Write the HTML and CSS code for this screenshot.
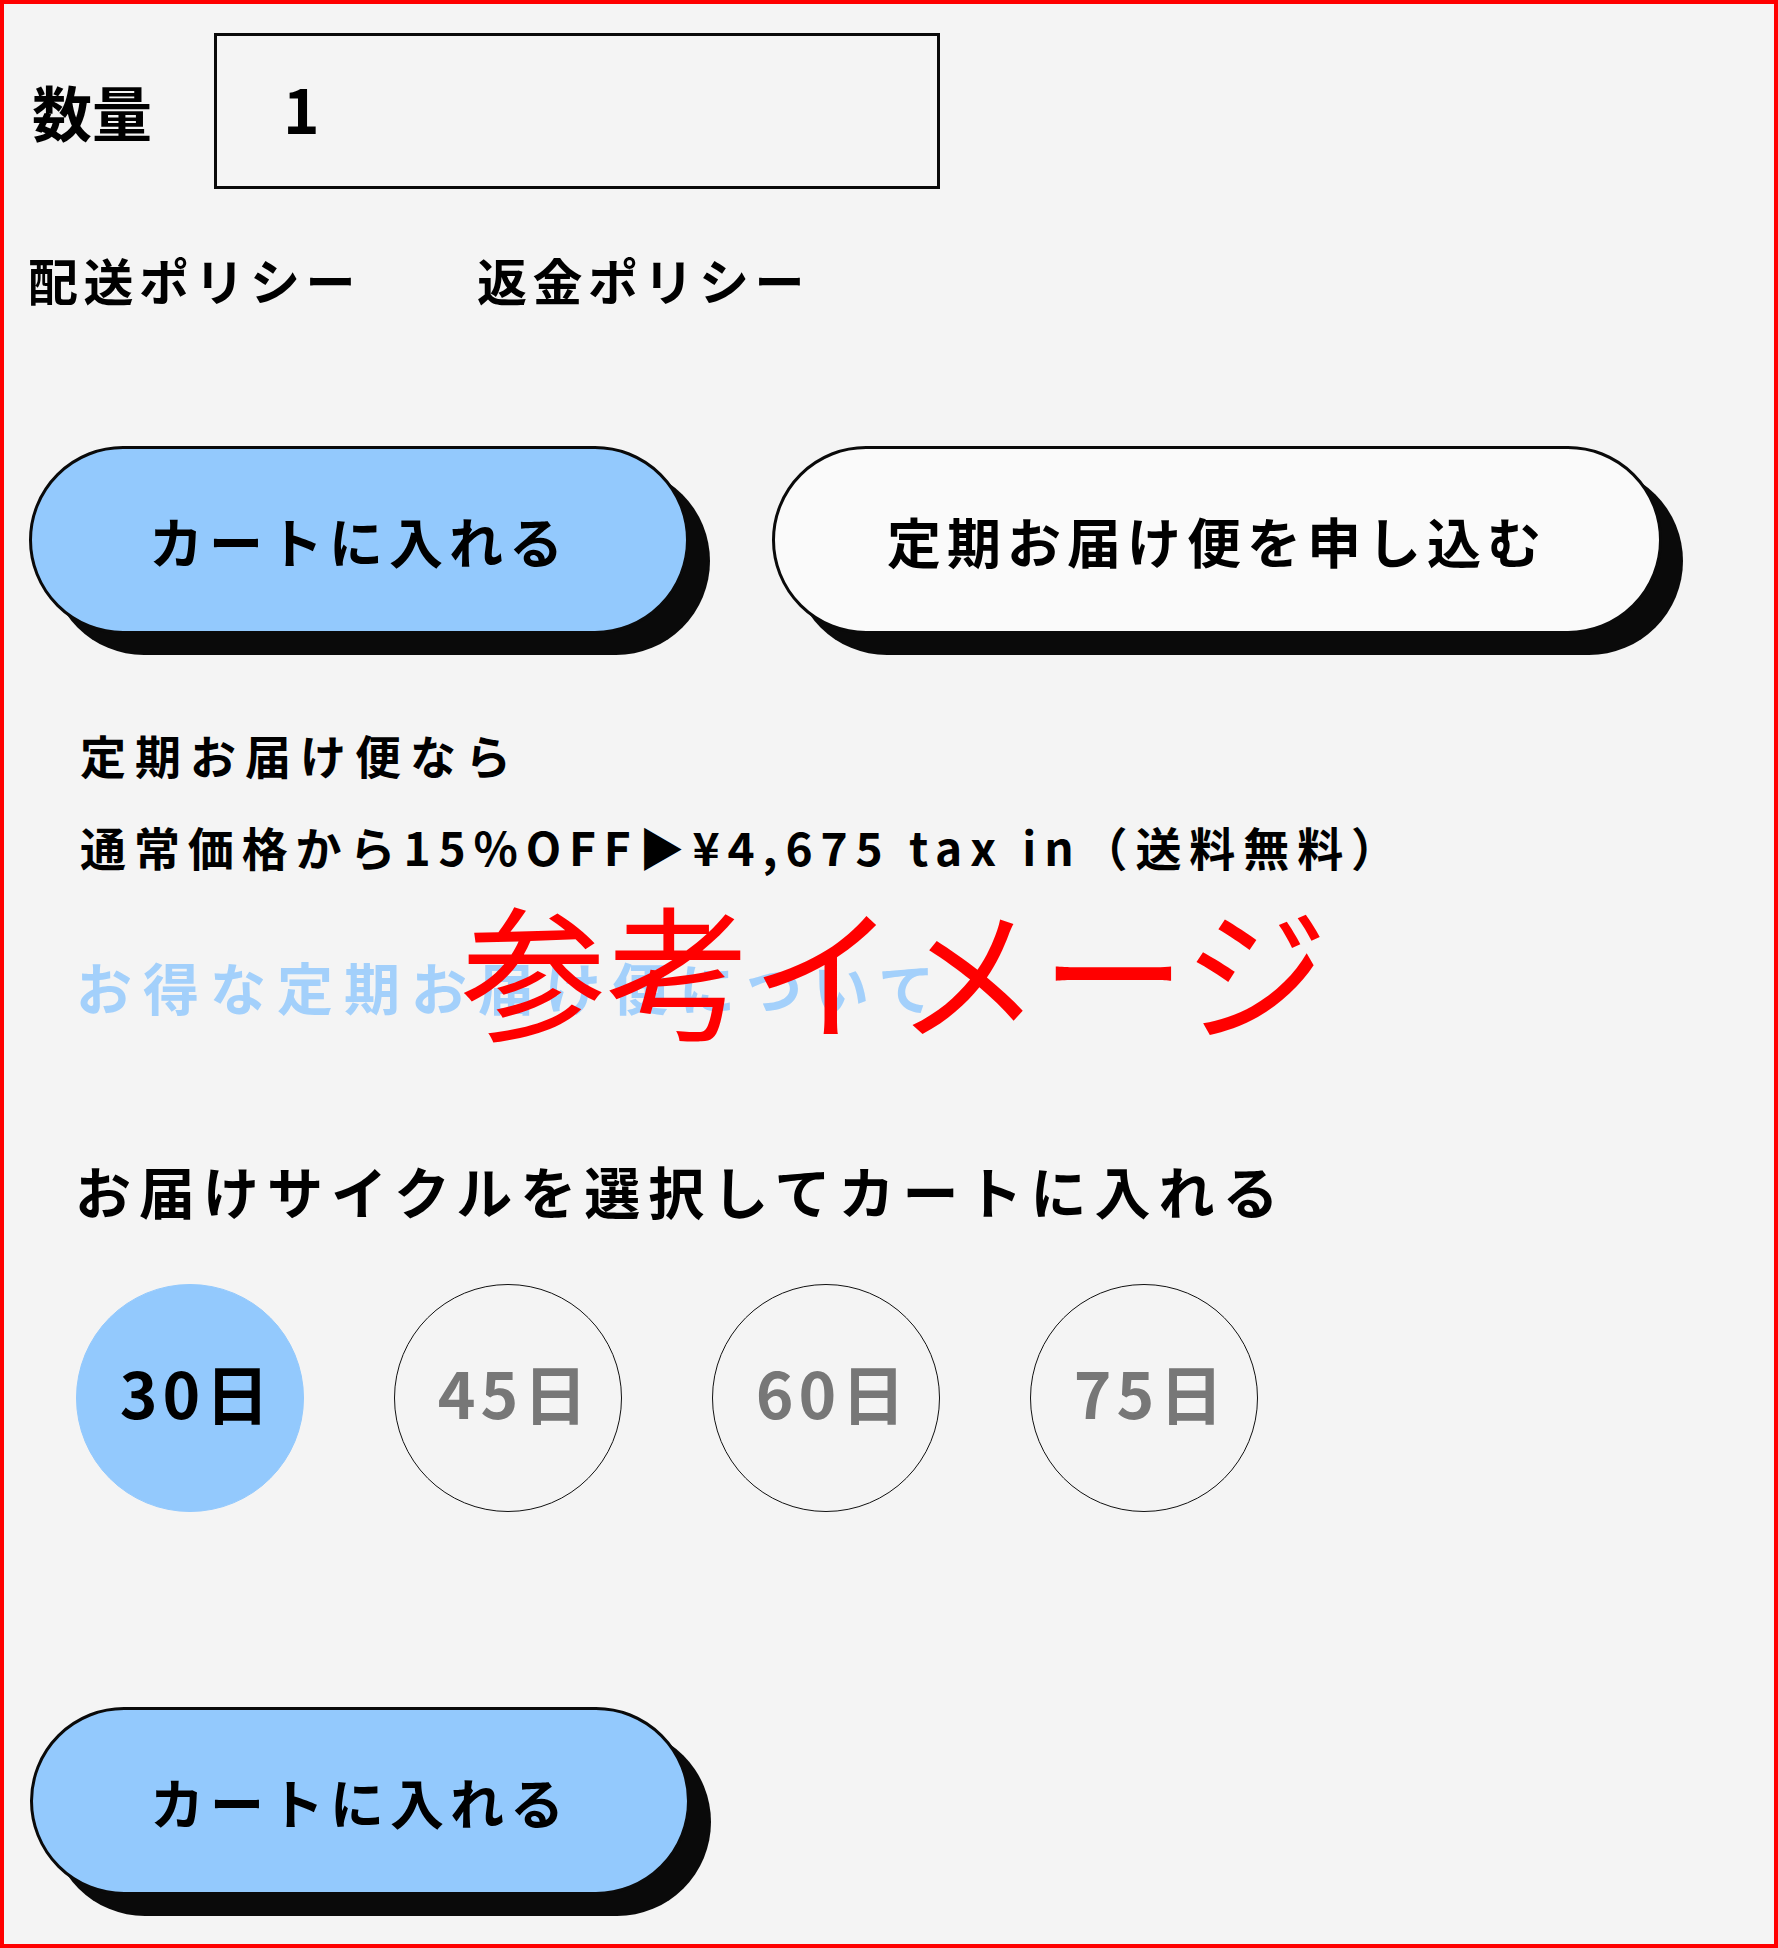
FILE: index.html
```html
<html>
    <head>
        <meta charset="utf-8">
        <link rel="stylesheet" href="styles.css">
    </head>
    <body>
        <div class="product-form">
            <div class="qty-row">
                <label class="qty-label" for="qty">数量</label>
                <input class="qty-input" id="qty" name="quantity" type="text" value="1">
            </div>
            <div class="policy-links">
                <a class="policy-link" href="#">配送ポリシー</a>
                <a class="policy-link" href="#">返金ポリシー</a>
            </div>
            <div class="cta-row">
                <button class="pill-btn pill-btn--blue">カートに入れる</button>
                <button class="pill-btn pill-btn--white">定期お届け便を申し込む</button>
            </div>
            <div class="sub-info">
                <p class="sub-text sub-text--lead">定期お届け便なら</p>
                <p class="sub-text">通常価格から15%OFF▶¥4,675 tax in（送料無料）</p>
                <a class="sub-link" href="#">お得な定期お届け便について</a>
                <h3 class="cycle-title">お届けサイクルを選択してカートに入れる</h3>
                <div class="cycle-list">
                    <button class="cycle-item is-active">30日</button>
                    <button class="cycle-item">45日</button>
                    <button class="cycle-item">60日</button>
                    <button class="cycle-item">75日</button>
                </div>
            </div>
            <div class="cta-row cta-row--bottom">
                <button class="pill-btn pill-btn--blue">カートに入れる</button>
            </div>
            <div class="sample-mark">参考イメージ</div>
        </div>
    </body>
</html>
```

FILE: styles.css
```css
body {
    margin: 0;
    background: #f4f4f4;
}
.product-form {
    position: relative;
    box-sizing: border-box;
    height: 1948px;
    border: 4px solid #ff0000;
    padding: 29px 0 0 24px;
    background: #f4f4f4;
    color: #000;
    font-family: "Noto Sans CJK JP", sans-serif;
    font-weight: 700;
    overflow: hidden;
}
.qty-row {
    display: flex;
    align-items: center;
    gap: 62px;
}
.qty-label {
    font-size: 60px;
    line-height: 1;
    padding-left: 4px;
}
.qty-input {
    box-sizing: border-box;
    width: 726px;
    height: 156px;
    margin: 0;
    border: 3px solid #0a0a0a;
    border-radius: 0;
    padding: 0 0 8px 66px;
    background: transparent;
    font-family: inherit;
    font-weight: 700;
    font-size: 62px;
    color: #000;
    outline: none;
}
.policy-links {
    display: flex;
    gap: 116px;
    margin-top: 65px;
}
.policy-link {
    font-size: 50px;
    line-height: 1;
    letter-spacing: 5.5px;
    color: #000;
    text-decoration: none;
}
.cta-row {
    display: flex;
    gap: 83px;
    margin-top: 142px;
    padding-left: 1px;
}
.pill-btn {
    box-sizing: border-box;
    height: 188px;
    border: 3px solid #0a0a0a;
    border-radius: 94px;
    box-shadow: 21px 21px 0 #0a0a0a;
    font-family: inherit;
    font-weight: 700;
    font-size: 54px;
    letter-spacing: 6px;
    color: #000;
    cursor: pointer;
}
.pill-btn--blue {
    width: 660px;
    background: #93c9fd;
}
.pill-btn--white {
    width: 890px;
    background: #fafafa;
}
.sub-info {
    padding-left: 48px;
    margin-top: 74px;
}
.sub-text {
    margin: 0;
    padding-left: 4px;
    font-size: 46px;
    line-height: 92px;
    letter-spacing: 7.9px;
}
.sub-text--lead {
    letter-spacing: 9px;
}
.sub-link {
    display: block;
    margin-top: 66px;
    font-size: 56px;
    line-height: 1;
    letter-spacing: 11px;
    color: #a3d0fb;
    text-decoration: none;
}
.cycle-title {
    margin: 148px 0 0 -1px;
    font-size: 56px;
    line-height: 1;
    letter-spacing: 8px;
}
.cycle-list {
    display: flex;
    gap: 90px;
    margin-top: 66px;
}
.cycle-item {
    box-sizing: border-box;
    width: 228px;
    height: 228px;
    border: 1px solid #111;
    border-radius: 50%;
    background: transparent;
    font-family: inherit;
    font-weight: 700;
    font-size: 64px;
    letter-spacing: 5px;
    color: #777;
    padding: 0 0 14px 14px;
}
.cycle-item.is-active {
    border-color: #93c9fd;
    background: #93c9fd;
    color: #000;
}
.cta-row--bottom {
    margin-top: 195px;
    padding-left: 2px;
}
.sample-mark {
    position: absolute;
    left: 457px;
    top: 891px;
    font-size: 145px;
    line-height: 1;
    font-weight: 400;
    color: #ff0000;
    white-space: nowrap;
}
```
